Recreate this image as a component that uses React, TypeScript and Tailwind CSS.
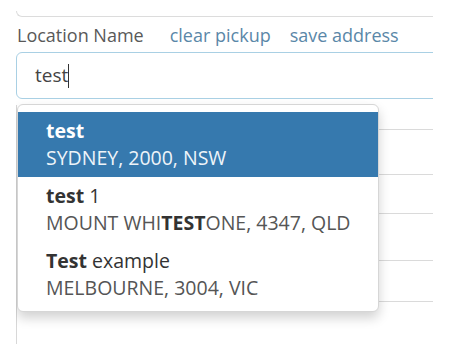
import React from "react";

type Suggestion = {
  name: React.ReactNode;
  address: React.ReactNode;
  active?: boolean;
};

const suggestions: Suggestion[] = [
  { name: <b>test</b>, address: "SYDNEY, 2000, NSW", active: true },
  {
    name: (
      <>
        <b>test</b> 1
      </>
    ),
    address: (
      <>
        MOUNT WHI<b className="text-[#333]">TEST</b>ONE, 4347, QLD
      </>
    ),
  },
  {
    name: (
      <>
        <b>Test</b> example
      </>
    ),
    address: "MELBOURNE, 3004, VIC",
  },
];

// heights of the rows of the list hidden behind the dropdown
const backRows = [31, 45, 39, 47, 41, 60];

export default function App() {
  return (
    <div className="w-[455px] h-[344px] bg-white overflow-hidden font-['Open_Sans',sans-serif]">
      <div className="relative ml-4 w-[417px] h-full overflow-hidden">
        <div className="mt-[11px] h-[6px] w-[440px] border-l border-b border-[#dcdcdc] rounded-bl-[6px]" />

        <div className="mt-[7px] flex items-center h-[22px] text-[18px] leading-[22px]">
          <label htmlFor="location_name" className="text-[#595959] pl-[1px]">
            Location Name
          </label>
          <a href="#" className="ml-[26px] text-[#5a87a8]">
            clear pickup
          </a>
          <a href="#" className="ml-[19px] text-[#5a87a8]">
            save address
          </a>
        </div>

        <div className="mt-[6px] h-[47px] w-[440px] flex items-center border border-[#a9d0e4] rounded-l-[6px] pl-[18px]">
          <span className="text-[19px] text-[#444]">test</span>
          <span className="w-px h-[24px] bg-[#333]" />
        </div>

        <div className="mt-[6px] border-l border-[#d8d8d8] h-[260px]">
          {backRows.map((h, i) => (
            <div
              key={i}
              style={{ height: i === 0 ? h - 6 : h }}
              className="border-b border-[#dadada]"
            />
          ))}
        </div>

        <div className="absolute left-px top-[104px] w-[362px] pt-[7px] pb-[4px] bg-white border border-[#d6d6d6] rounded-[6px] shadow-[0_6px_12px_rgba(0,0,0,0.18)]">
          {suggestions.map((s, i) => (
            <div
              key={i}
              className={`pl-[28px] py-[6px] text-[19.5px] leading-[26.5px] ${
                s.active ? "bg-[#3679ae] text-white" : "text-[#333]"
              }`}
            >
              <div>{s.name}</div>
              <div className={s.active ? "text-[#eef4f9]" : "text-[#555]"}>
                {s.address}
              </div>
            </div>
          ))}
        </div>
      </div>
    </div>
  );
}
